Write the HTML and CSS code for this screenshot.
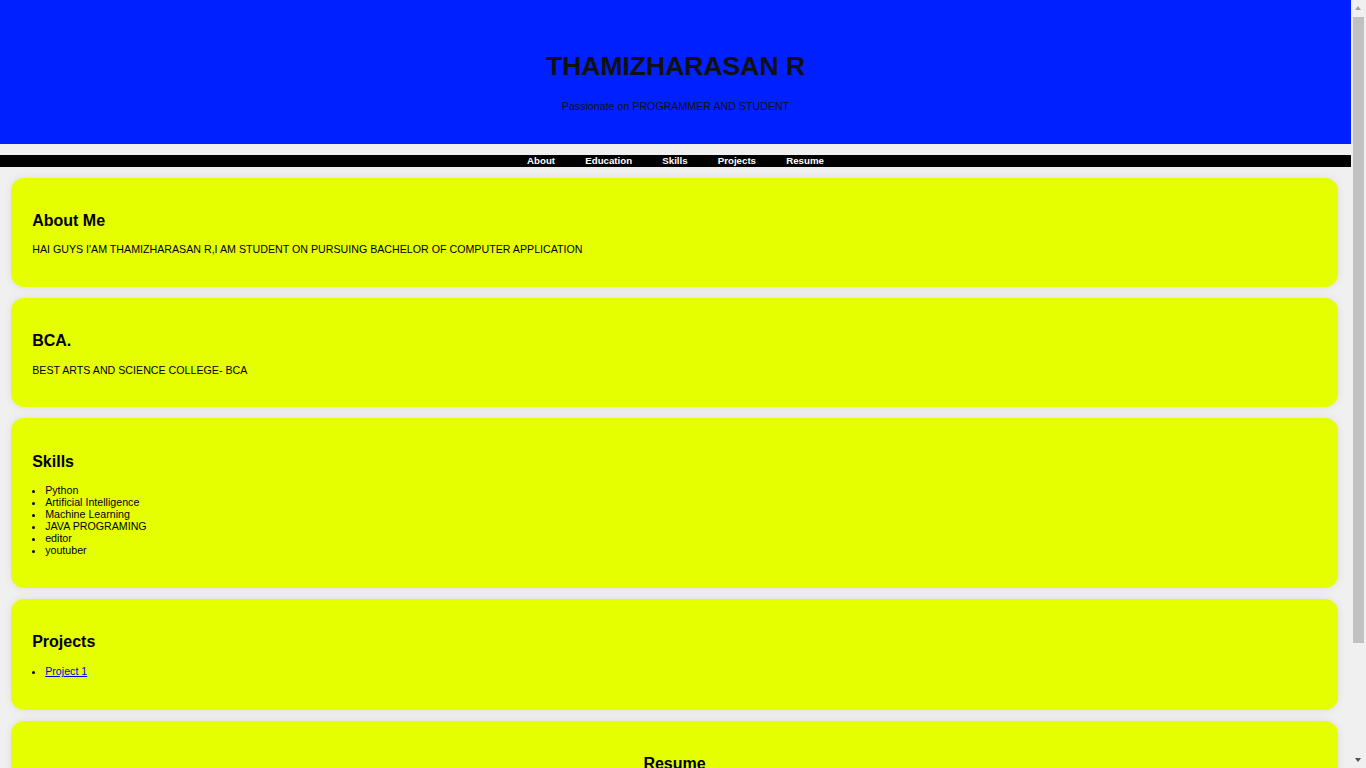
FILE: index.html
```html
<!DOCTYPE html>
<html lang="en">
<head>
<meta charset="utf-8">
<title>THAMIZHARASAN R</title>
<link rel="stylesheet" href="styles.css">
</head>
<body>
<header class="hero">
  <h1 class="hero-title">THAMIZHARASAN R</h1>
  <p class="hero-sub">Passionate on PROGRAMMER AND STUDENT</p>
</header>
<nav class="nav">
  <a class="nav-link" href="#about">About</a>
  <a class="nav-link" href="#education">Education</a>
  <a class="nav-link" href="#skills">Skills</a>
  <a class="nav-link" href="#projects">Projects</a>
  <a class="nav-link" href="#resume">Resume</a>
</nav>
<main class="content">
  <section class="card" id="about">
    <h2 class="card-title">About Me</h2>
    <p class="card-text">HAI GUYS I'AM THAMIZHARASAN R,I AM STUDENT ON PURSUING BACHELOR OF COMPUTER APPLICATION</p>
  </section>
  <section class="card" id="education">
    <h2 class="card-title">BCA.</h2>
    <p class="card-text">BEST ARTS AND SCIENCE COLLEGE- BCA</p>
  </section>
  <section class="card" id="skills">
    <h2 class="card-title">Skills</h2>
    <ul class="card-list">
      <li>Python</li>
      <li>Artificial Intelligence</li>
      <li>Machine Learning</li>
      <li>JAVA PROGRAMING</li>
      <li>editor</li>
      <li>youtuber</li>
    </ul>
  </section>
  <section class="card" id="projects">
    <h2 class="card-title">Projects</h2>
    <ul class="card-list card-list-links">
      <li><a class="card-link" href="#">Project 1</a></li>
    </ul>
  </section>
  <section class="card card-center" id="resume">
    <h2 class="card-title">Resume</h2>
    <p class="card-text">Download my resume to know more about me.</p>
    <p class="card-text"><a class="card-link" href="#">Download Resume</a></p>
  </section>
</main>
<div class="scrollbar" aria-hidden="true">
  <div class="scroll-arrow scroll-up"></div>
  <div class="scroll-track"><div class="scroll-thumb"></div></div>
  <div class="scroll-arrow scroll-down"></div>
</div>
</body>
</html>
```

FILE: styles.css
```css
html, body {
  margin: 0;
  padding: 0;
}

body {
  background: #f0f0f0;
  color: #000;
  font-family: "Liberation Sans", Arial, sans-serif;
  font-size: 10.667px;
  margin-right: 15px;
}

.hero {
  background: #0020ff;
  text-align: center;
  padding: 51px 0 32px;
  margin: 0 0 11px;
}

.hero-title {
  margin: 0;
  font-size: 26.5px;
  line-height: 30px;
  font-weight: bold;
  color: #111;
}

.hero-sub {
  margin: 19px 0 0;
  font-size: 10.667px;
  line-height: 12px;
  color: #111;
}

.nav {
  background: #000;
  display: flex;
  justify-content: center;
  gap: 30.2px;
  height: 12px;
  line-height: 12px;
  margin: 0 0 10.5px;
}

.nav-link {
  color: #fff;
  text-decoration: none;
  font-weight: bold;
  font-size: 9.7px;
}

.content {
  display: flex;
  flex-direction: column;
  gap: 10.8px;
  padding: 0 13px 20px 11px;
}

.card {
  background: #e6ff00;
  border-radius: 13px;
  padding: 21.2px;
  box-shadow: 0 0 10px rgba(0, 0, 0, 0.08);
}

.card-center {
  text-align: center;
}

.card-title {
  font-size: 16px;
  font-weight: bold;
  margin: 13.3px 0;
}

.card-text {
  margin: 10.6px 0;
}

.card-list {
  margin: 10.6px 0;
  padding-left: 13px;
}

.card-list-links {
  margin: 14.3px 0 11.6px;
}

.card-link {
  color: #0000ee;
}

/* fake browser scrollbar, drawn over the right edge */
.scrollbar {
  position: fixed;
  top: 0;
  right: 0;
  width: 15px;
  height: 100vh;
  background: #f0f0f0;
  display: flex;
  flex-direction: column;
}

.scroll-arrow {
  height: 17px;
  flex: none;
  position: relative;
}

.scroll-arrow::after {
  content: "";
  position: absolute;
  left: 4px;
  width: 0;
  height: 0;
  border-left: 3.5px solid transparent;
  border-right: 3.5px solid transparent;
}

.scroll-up::after {
  top: 6px;
  border-bottom: 4px solid #a3a3a3;
}

.scroll-down::after {
  top: 7px;
  border-top: 4px solid #505050;
}

.scroll-track {
  flex: 1;
  padding: 0 2px 0 2px;
}

.scroll-thumb {
  height: 626px;
  background: #c1c1c1;
}
```
